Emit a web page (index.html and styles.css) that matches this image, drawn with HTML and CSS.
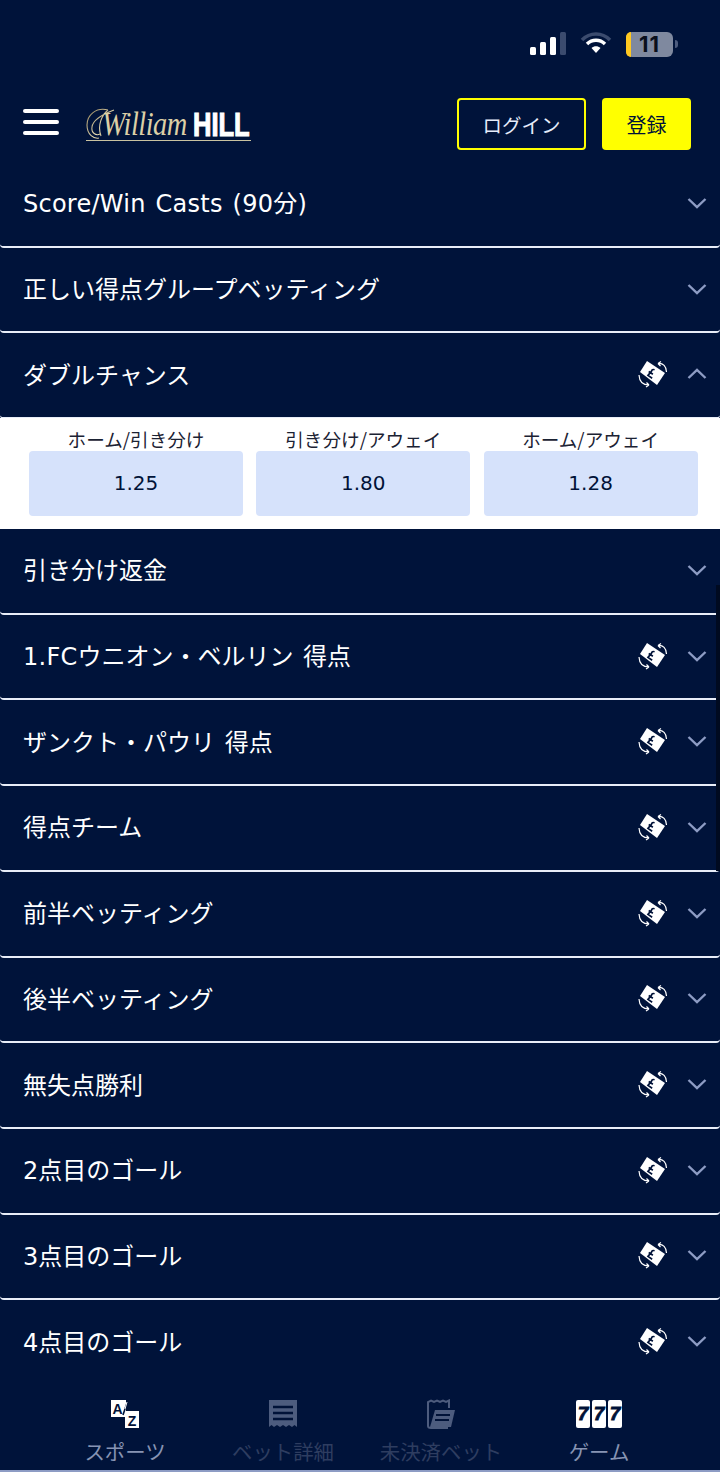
FILE: index.html
```html
<!DOCTYPE html>
<html lang="ja">
<head>
    <meta charset="UTF-8">
    <meta name="viewport" content="width=device-width, initial-scale=1.0">
    <title>William Hill</title>
    <link rel="stylesheet" href="styles.css">
</head>
<body>
    <svg class="defs" width="0" height="0">
        <symbol id="cashout" viewBox="0 0 30 30">
            <path d="M9 2 L27 14 L19 26 L2 13 Z" fill="#fff"/>
            <path d="M15.6 10.2 Q12.8 10 13 12.6 L10.8 17.4 L15.6 19 M10.4 13.4 L15.2 15" fill="none" stroke="#001238" stroke-width="1.7" transform="rotate(16 14 14)"/>
            <path d="M20 4.5 Q28 4 28.5 13 M20 4.5 L23 2.5 M20 4.5 L22.5 7" fill="none" stroke="#fff" stroke-width="1.2"/>
            <path d="M1 16 Q1.5 26 11 26 M11 26 L8 28 M11 26 L8.5 23.5" fill="none" stroke="#fff" stroke-width="1.2"/>
        </symbol>
        <symbol id="chevron" viewBox="0 0 20 12">
            <path d="M1.5 2 L10 10 L18.5 2" fill="none" stroke="#8d9cc4" stroke-width="2.4"/>
        </symbol>
        <linearGradient id="gold" x1="0" y1="0" x2="1" y2="1">
            <stop offset="0" stop-color="#8f8058"/>
            <stop offset="0.6" stop-color="#e4d8b0"/>
            <stop offset="1" stop-color="#a8966a"/>
        </linearGradient>
    </svg>

    <div class="status-bar">
        <div class="signal">
            <span class="bar bar-1"></span>
            <span class="bar bar-2"></span>
            <span class="bar bar-3"></span>
            <span class="bar bar-4"></span>
        </div>
        <svg class="wifi" width="32" height="24" viewBox="0 0 32 24">
            <path d="M2 9 C10 1 22 1 30 9" fill="none" stroke="#3b4b6e" stroke-width="3.6"/>
            <path d="M7 13 C12 8 20 8 25 13" fill="none" stroke="#fff" stroke-width="3.4"/>
            <path d="M11.5 17 C14 14.6 18 14.6 20.5 17 L16 22 Z" fill="#fff"/>
        </svg>
        <div class="battery">
            <span class="battery-level"></span>
            <span class="battery-num">11</span>
        </div>
        <span class="battery-tip"></span>
    </div>

    <header class="header">
        <div class="burger"><span></span><span></span><span></span></div>
        <div class="logo">
            <svg class="logo-flourish" width="44" height="36" viewBox="0 0 44 36">
                <path d="M22 3 C10 0 1 8 1 18 C1 28 8 32 13 31 M22 3 C16 8 11 18 15 29 M28 3 C20 6 7 12 6 20 C5 26 10 29 14 27" fill="none" stroke="url(#gold)" stroke-width="1.1"/>
            </svg>
            <span class="logo-script">William</span>
            <span class="logo-hill">HILL</span>
        </div>
        <div class="header-btns">
            <button class="btn btn-login">ログイン</button>
            <button class="btn btn-register">登録</button>
        </div>
    </header>

    <main class="markets">
        <div class="market">
            <span class="market-name market-latin">Score/Win Casts (90分)</span>
            <svg class="chevron"><use href="#chevron"/></svg>
        </div>
        <div class="market">
            <span class="market-name">正しい得点グループベッティング</span>
            <svg class="chevron"><use href="#chevron"/></svg>
        </div>
        <div class="market market-open">
            <span class="market-name">ダブルチャンス</span>
            <svg class="cashout"><use href="#cashout"/></svg>
            <svg class="chevron chevron-up"><use href="#chevron"/></svg>
        </div>
        <div class="odds-panel">
            <div class="odds">
                <div class="odds-label">ホーム/引き分け</div>
                <div class="odds-price">1.25</div>
            </div>
            <div class="odds">
                <div class="odds-label">引き分け/アウェイ</div>
                <div class="odds-price">1.80</div>
            </div>
            <div class="odds">
                <div class="odds-label">ホーム/アウェイ</div>
                <div class="odds-price">1.28</div>
            </div>
        </div>
        <div class="market">
            <span class="market-name">引き分け返金</span>
            <svg class="chevron"><use href="#chevron"/></svg>
        </div>
        <div class="market">
            <span class="market-name"><span class="market-latin">1.FC</span>ウニオン・ベルリン 得点</span>
            <svg class="cashout"><use href="#cashout"/></svg>
            <svg class="chevron"><use href="#chevron"/></svg>
        </div>
        <div class="market">
            <span class="market-name">ザンクト・パウリ 得点</span>
            <svg class="cashout"><use href="#cashout"/></svg>
            <svg class="chevron"><use href="#chevron"/></svg>
        </div>
        <div class="market">
            <span class="market-name">得点チーム</span>
            <svg class="cashout"><use href="#cashout"/></svg>
            <svg class="chevron"><use href="#chevron"/></svg>
        </div>
        <div class="market">
            <span class="market-name">前半ベッティング</span>
            <svg class="cashout"><use href="#cashout"/></svg>
            <svg class="chevron"><use href="#chevron"/></svg>
        </div>
        <div class="market">
            <span class="market-name">後半ベッティング</span>
            <svg class="cashout"><use href="#cashout"/></svg>
            <svg class="chevron"><use href="#chevron"/></svg>
        </div>
        <div class="market">
            <span class="market-name">無失点勝利</span>
            <svg class="cashout"><use href="#cashout"/></svg>
            <svg class="chevron"><use href="#chevron"/></svg>
        </div>
        <div class="market">
            <span class="market-name">2点目のゴール</span>
            <svg class="cashout"><use href="#cashout"/></svg>
            <svg class="chevron"><use href="#chevron"/></svg>
        </div>
        <div class="market">
            <span class="market-name">3点目のゴール</span>
            <svg class="cashout"><use href="#cashout"/></svg>
            <svg class="chevron"><use href="#chevron"/></svg>
        </div>
        <div class="market">
            <span class="market-name">4点目のゴール</span>
            <svg class="cashout"><use href="#cashout"/></svg>
            <svg class="chevron"><use href="#chevron"/></svg>
        </div>
        <div class="scrollbar"></div>
    </main>

    <nav class="bottom-nav">
        <div class="nav-item">
            <svg class="nav-icon" width="30" height="30" viewBox="0 0 30 30">
                <rect x="1" y="1" width="15" height="17" fill="#fff"/>
                <rect x="15" y="12" width="14" height="17" fill="#fff"/>
                <path d="M18 1 L13 16" stroke="#001238" stroke-width="1.6"/>
                <path d="M17 3 L15 10" stroke="#fff" stroke-width="1"/>
                <text class="az" x="7.5" y="14.5">A</text>
                <text class="az" x="22" y="26.5">Z</text>
            </svg>
            <span class="nav-label">スポーツ</span>
        </div>
        <div class="nav-item nav-item-off">
            <svg class="nav-icon" width="30" height="30" viewBox="0 0 30 30">
                <path d="M1 1 H29 V28 L26.5 26 L24 28 L21 26 L18 28 L15 26 L12 28 L9 26 L6 28 L3.5 26 L1 28 Z" fill="#4d5c7e"/>
                <path d="M5 8 H25 M5 14 H25 M5 20 H25" stroke="#001238" stroke-width="2.4"/>
            </svg>
            <span class="nav-label">ベット詳細</span>
        </div>
        <div class="nav-item nav-item-off">
            <svg class="nav-icon" width="30" height="30" viewBox="0 0 30 30">
                <path d="M2 27 V3 L5 1.5 L8 3 L11 1.5 L14 3 L17 1.5 L20 3 L23 1.5 L23 9" fill="none" stroke="#4d5c7e" stroke-width="2"/>
                <path d="M2 27 Q2 29 5 29 H22" fill="none" stroke="#4d5c7e" stroke-width="2"/>
                <path d="M9 11 H29 L25 28 H4 Z" fill="#4d5c7e"/>
                <path d="M10 16 H24 M9 21 H23" stroke="#001238" stroke-width="2"/>
            </svg>
            <span class="nav-label">未決済ベット</span>
        </div>
        <div class="nav-item">
            <div class="slots">
                <span class="slot">7</span>
                <span class="slot">7</span>
                <span class="slot">7</span>
            </div>
            <span class="nav-label">ゲーム</span>
        </div>
    </nav>
</body>
</html>
```

FILE: styles.css
```css
* {
    margin: 0;
    padding: 0;
    box-sizing: border-box;
}

html, body {
    height: 1472px;
    overflow: hidden;
}

body {
    font-family: 'DejaVu Sans', 'Noto Sans CJK JP', sans-serif;
    background: #00133a;
    color: #fff;
    display: flex;
    flex-direction: column;
}

.defs {
    position: absolute;
}

/* status bar */
.status-bar {
    height: 98px;
    flex-shrink: 0;
    display: flex;
    align-items: flex-start;
    justify-content: flex-end;
    padding: 31px 42px 0 0;
}

.signal {
    display: flex;
    align-items: flex-end;
    gap: 4px;
    height: 24px;
    margin-right: 14px;
}

.bar {
    width: 6px;
    background: #fff;
    border-radius: 1.5px;
}

.bar-1 { height: 8px; }
.bar-2 { height: 13px; }
.bar-3 { height: 18px; }
.bar-4 { height: 23px; background: #3b4b6e; }

.wifi {
    margin-right: 14px;
}

.battery {
    width: 47px;
    height: 25px;
    border-radius: 6px;
    background: #7f899f;
    display: flex;
    margin-top: 1px;
}

.battery-level {
    width: 5px;
    background: #ffc820;
    border-radius: 6px 0 0 6px;
}

.battery-num {
    flex: 1;
    color: #0a0f1c;
    font-family: 'Inter', sans-serif;
    font-size: 22px;
    font-weight: 700;
    line-height: 25px;
    letter-spacing: 1px;
    text-align: center;
    padding-right: 5px;
}

.battery-tip {
    width: 3px;
    height: 8px;
    margin: 9px 0 0 2px;
    background: #4d5c7e;
    border-radius: 0 3px 3px 0;
}

/* header */
.header {
    height: 64px;
    flex-shrink: 0;
    display: flex;
    align-items: flex-start;
    padding: 0 29px 0 23px;
}

.burger {
    width: 36px;
    height: 26px;
    margin-top: 11px;
    display: flex;
    flex-direction: column;
    justify-content: space-between;
}

.burger span {
    height: 4px;
    background: #fff;
    border-radius: 2px;
}

.logo {
    position: relative;
    margin-left: 27px;
    margin-top: 9px;
    width: 165px;
    height: 34px;
    padding-left: 16px;
    display: flex;
    align-items: flex-end;
    border-bottom: 1px solid #c9c2a0;
}

.logo-flourish {
    position: absolute;
    left: 0;
    top: 0;
}

.logo-script {
    width: 91px;
    font-family: 'Liberation Serif', serif;
    font-style: italic;
    font-size: 33px;
    line-height: 31px;
    letter-spacing: -0.6px;
    color: #dccfa6;
    transform: scaleX(0.86);
    transform-origin: left bottom;
}

.logo-hill {
    width: 57px;
    font-family: 'Liberation Sans', sans-serif;
    font-weight: 700;
    font-size: 34px;
    line-height: 32px;
    transform: scaleX(0.75);
    transform-origin: left bottom;
    -webkit-text-stroke: 1.2px #fff;
}

.header-btns {
    margin-left: auto;
    display: flex;
    gap: 16px;
}

.btn {
    height: 52px;
    border-radius: 4px;
    font-family: 'Noto Sans CJK JP', sans-serif;
    font-size: 20px;
}

.btn-login {
    width: 129px;
    background: transparent;
    border: 2px solid #ffff00;
    color: #e6ecfa;
    font-size: 19.5px;
}

.btn-register {
    width: 89px;
    background: #ffff00;
    border: 0;
    color: #001238;
}

/* market list */
.markets {
    flex: 1;
    min-height: 0;
    overflow: hidden;
    position: relative;
}

.market {
    height: 85.7px;
    display: flex;
    align-items: center;
    padding: 0 13px 4px 23px;
    border-bottom: 2px solid #e8edf8;
    border-radius: 0 0 4px 4px;
}

.market-name {
    font-size: 24px;
    flex: 1;
    white-space: nowrap;
    word-spacing: 2px;
}

.market-latin {
    letter-spacing: 0.25px;
}

.cashout {
    width: 30px;
    height: 30px;
    margin: 2px 19px 0 0;
}

.chevron {
    width: 20px;
    height: 12px;
    margin-top: 2px;
}

.chevron-up {
    transform: rotate(180deg);
}

.odds-panel {
    background: #fff;
    height: 111px;
    padding: 9px 23px 0 29px;
    display: grid;
    grid-template-columns: repeat(3, 214px);
    gap: 13.3px;
    margin-top: -1px;
}

.odds-label {
    color: #1b2233;
    font-family: 'Noto Sans CJK JP', sans-serif;
    font-size: 18.6px;
    line-height: 24px;
    text-align: center;
    white-space: nowrap;
}

.odds-price {
    height: 65px;
    background: #d6e2fb;
    border-radius: 4px;
    color: #001238;
    font-size: 20px;
    line-height: 65px;
    text-align: center;
}

.scrollbar {
    position: absolute;
    top: 423px;
    right: 0;
    width: 4px;
    height: 286px;
    background: #000a20;
}

/* bottom navigation */
.bottom-nav {
    height: 92px;
    flex-shrink: 0;
    display: flex;
    padding: 19px 42px 0 46px;
    background: #00133a;
    border-bottom: 2px solid #8d9cc4;
}

.nav-item {
    flex: 1;
    display: flex;
    flex-direction: column;
    align-items: center;
}

.nav-icon {
    height: 30px;
}

.nav-label {
    font-family: 'Noto Sans CJK JP', sans-serif;
    font-size: 20.4px;
    line-height: 28px;
    margin-top: 8px;
    color: #8794b3;
    white-space: nowrap;
}

.nav-item-off .nav-label {
    color: #2e3d60;
}

.az {
    font-family: 'Liberation Sans', sans-serif;
    font-weight: 700;
    font-size: 14px;
    text-anchor: middle;
    fill: #001238;
}

.slots {
    display: flex;
    gap: 1.5px;
    height: 30px;
}

.slot {
    width: 14.5px;
    height: 28px;
    margin-top: 1px;
    background: #fff;
    border-radius: 2px;
    color: #001238;
    font-family: 'Liberation Sans', sans-serif;
    font-weight: 700;
    font-style: italic;
    font-size: 19px;
    line-height: 28px;
    text-align: center;
    -webkit-text-stroke: 0.8px #001238;
}
```
